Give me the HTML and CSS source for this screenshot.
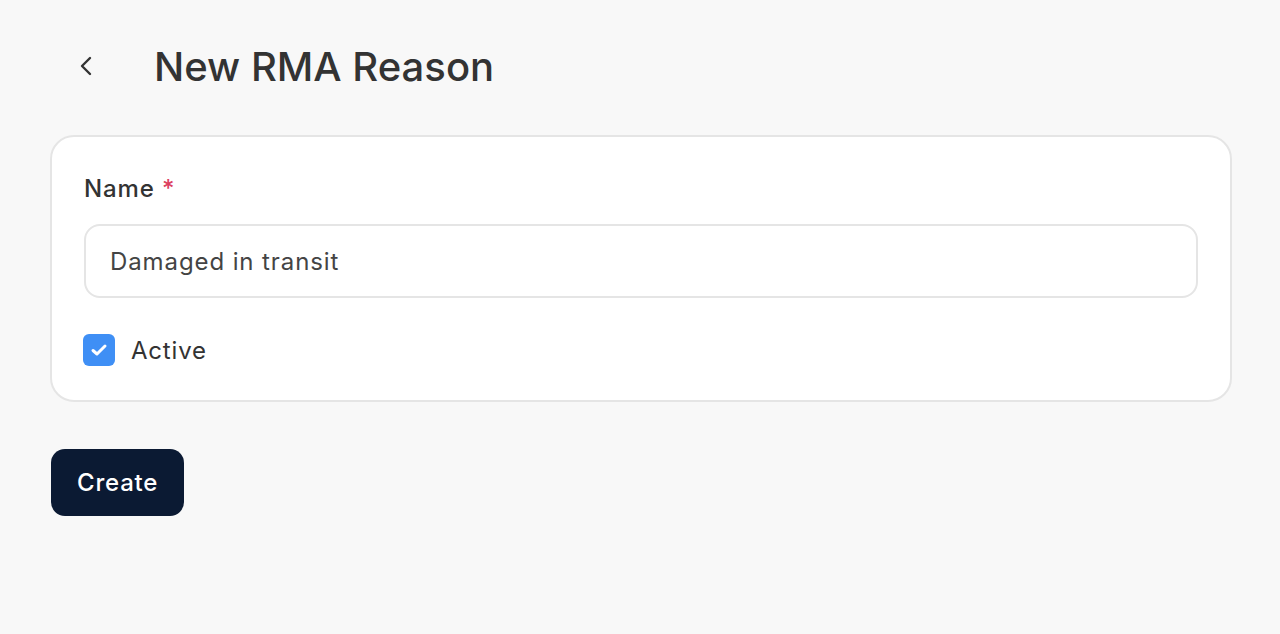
FILE: index.html
```html
<!DOCTYPE html>
<html>
<head>
<meta charset="utf-8">
<link rel="stylesheet" href="styles.css">
</head>
<body>
<div class="page">
  <header class="header">
    <button class="back" aria-label="Back">
      <svg width="14" height="22" viewBox="0 0 14 22"><path d="M11 3 L3 11 L11 19" fill="none" stroke="#333" stroke-width="2.4" stroke-linecap="round" stroke-linejoin="round"/></svg>
    </button>
    <h1 class="title">New RMA Reason</h1>
  </header>
  <section class="card">
    <label class="label">Name <span class="req">*</span></label>
    <div class="input">Damaged in transit</div>
    <div class="check-row">
      <span class="checkbox">
        <svg width="18" height="14" viewBox="0 0 18 14"><path d="M3 7.5 L7 11 L15 3" fill="none" stroke="#fff" stroke-width="3" stroke-linecap="round" stroke-linejoin="round"/></svg>
      </span>
      <span class="check-label">Active</span>
    </div>
  </section>
  <button class="create">Create</button>
</div>
</body>
</html>
```
FILE: styles.css
```css
* { box-sizing: border-box; }
html, body { margin: 0; padding: 0; }
body {
  background: #f8f8f8;
  font-family: Inter, "Noto Sans", sans-serif;
  color: #333;
}
.page {
  padding: 30px 48px 0 50px;
}
.header {
  display: flex;
  align-items: center;
  height: 72px;
  margin-bottom: 33px;
}
.back {
  width: 74px;
  height: 40px;
  padding: 0 0 0 29px;
  border: 0;
  background: none;
  display: flex;
  align-items: center;
  margin-right: 30px;
}
.title {
  margin: 0;
  font-size: 40px;
  font-weight: 500;
  color: #333;
  letter-spacing: 0;
}
.card {
  background: #fff;
  border: 2px solid #e5e5e5;
  border-radius: 24px;
  padding: 36px 32px 34px 31px;
}
.label {
  display: block;
  font-size: 24px;
  line-height: 32px;
  font-weight: 500;
  color: #333;
  letter-spacing: 0.9px;
  margin-bottom: 19px;
  padding-left: 1px;
}
.req { color: #dc3f61; }
.input {
  height: 74px;
  margin-left: 1px;
  border: 2px solid #e5e5e5;
  border-radius: 16px;
  padding: 0 24px;
  display: flex;
  align-items: center;
  font-size: 24px;
  letter-spacing: 0.9px;
  color: #444;
  margin-bottom: 36px;
}
.check-row {
  display: flex;
  align-items: center;
  gap: 16px;
}
.checkbox {
  width: 32px;
  height: 32px;
  border-radius: 6px;
  background: #3f8ff5;
  display: flex;
  align-items: center;
  justify-content: center;
}
.check-label {
  font-size: 24px;
  letter-spacing: 0.8px;
  color: #333;
}
.create {
  margin-top: 47px;
  margin-left: 1px;
  height: 67px;
  padding: 0 26px;
  border: 0;
  border-radius: 14px;
  background: #0b1a33;
  color: #fff;
  font-family: Inter, "Noto Sans", sans-serif;
  font-size: 24px;
  font-weight: 500;
  letter-spacing: 0.8px;
}
```
